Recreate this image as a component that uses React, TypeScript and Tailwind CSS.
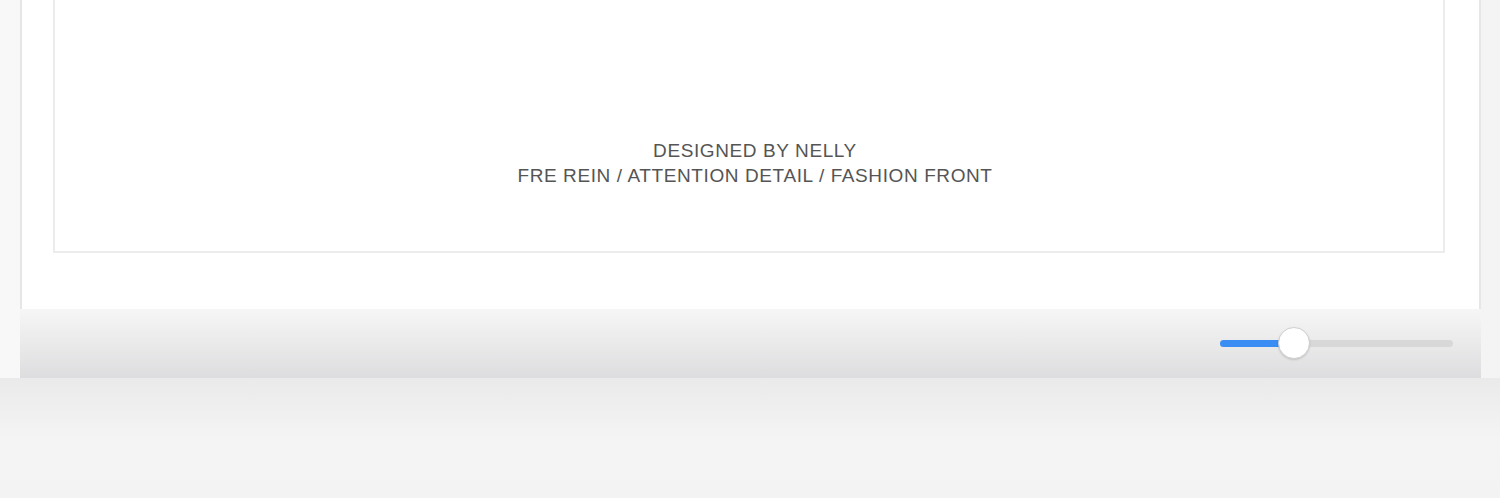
import React from "react";

export default function App() {
  return (
    <div
      className="w-full h-[498px] overflow-hidden bg-[#f3f3f3]"
      style={{ fontFamily: '"Liberation Sans", Arial, sans-serif' }}
    >
      <div className="pl-[20px] pr-[19px] bg-gradient-to-r from-[#f8f8f8] via-[#f1f1f1] to-[#f4f4f4]">
        <div className="flex flex-col">
          {/* screen */}
          <div className="h-[309px] bg-white border-l-2 border-r-2 border-[#e6e6e6] pl-[31px] pr-[34px]">
            <div className="h-[253px] border-x-2 border-b-2 border-[#ececec] flex flex-col items-center pt-[138px] pl-[12px]">
              <p className="text-[19px] leading-[25px] text-[#555555] tracking-[0.6px]">DESIGNED BY NELLY</p>
              <p className="text-[19px] leading-[25px] text-[#555555] tracking-[0.6px]">
                FRE REIN / ATTENTION DETAIL / FASHION FRONT
              </p>
            </div>
          </div>
          {/* bottom bar */}
          <div className="h-[69px] flex items-center justify-end pr-[28px] bg-gradient-to-b from-[#f6f6f6] via-[#ebeaeb] to-[#dddcde]">
            <div className="relative w-[233px] h-[7px] rounded-full bg-[#d8d8d8]">
              <div className="absolute left-0 top-0 h-[7px] w-[74px] rounded-full bg-[#3a8ef3]" />
              <div className="absolute left-[58px] top-[-13px] w-[32px] h-[32px] rounded-full bg-white border border-[#d0d0d0] shadow-[0_1px_2px_rgba(0,0,0,0.15)]" />
            </div>
          </div>
        </div>
      </div>
      <div className="h-[120px] bg-gradient-to-b from-[#eaeaeb] via-[#f4f4f4] to-[#f3f3f3]" />
    </div>
  );
}
